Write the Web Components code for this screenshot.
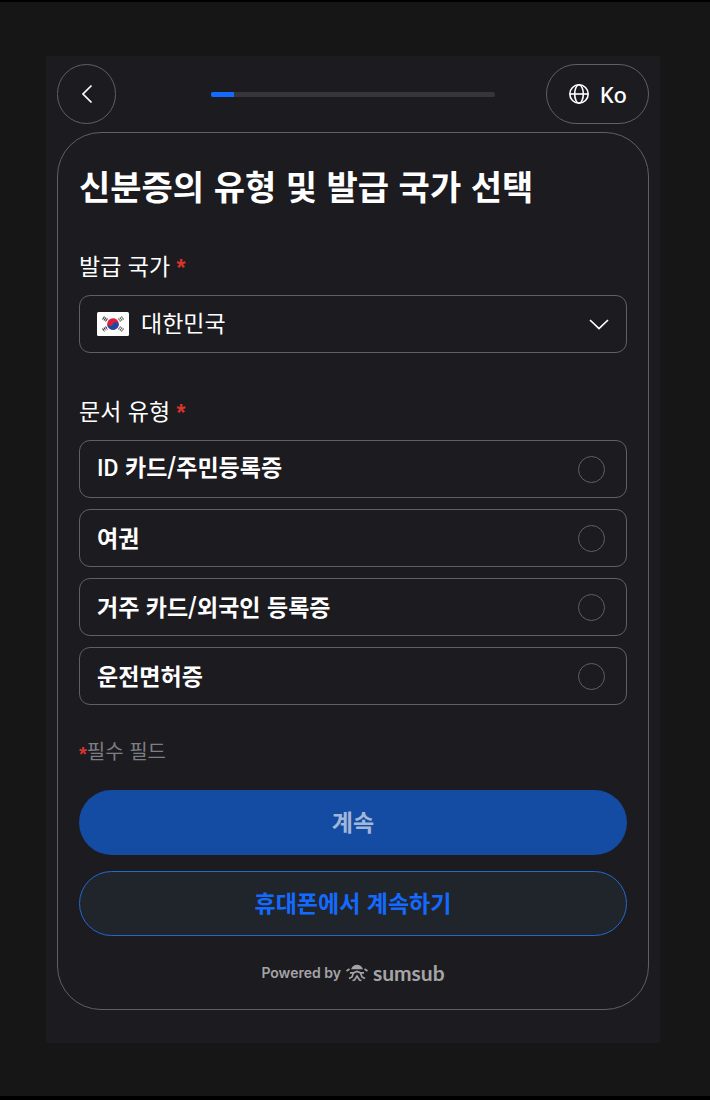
<!DOCTYPE html>
<html lang="ko">
<head>
<meta charset="utf-8">
<meta name="viewport" content="width=device-width, initial-scale=1">
<title>신분증의 유형 및 발급 국가 선택</title>
<style>
    :root {
        --color-page: #161616;
        --color-panel: #1c1b20;
        --color-line: #5f5f64;
        --color-text: #ffffff;
        --color-muted: #7e7e82;
        --color-required: #d9332e;
        --color-accent: #146aff;
    }

    html {
        background: var(--color-page);
    }

    body {
        box-sizing: border-box;
        min-height: 100vh;
        margin: 0;
        padding: 54px 50px 53px 46px;
        border-top: 2px solid #000;
        border-bottom: 4px solid #000;
        color: var(--color-text);
        font-family: "Noto Sans CJK KR", sans-serif;
        font-size: 23px;
        line-height: 32px;
    }
</style>
</head>
<body>
<verify-panel>
    <verify-header slot="header" value="8" language="Ko"></verify-header>
    <h1 slot="title">신분증의 유형 및 발급 국가 선택</h1>
    <country-field label="발급 국가" country="대한민국"></country-field>
    <document-options label="문서 유형"></document-options>
    <required-note>필수 필드</required-note>
    <action-button variant="primary">계속</action-button>
    <action-button variant="outline">휴대폰에서 계속하기</action-button>
    <powered-by slot="footer"></powered-by>
</verify-panel>

<script>
/**
 * Verify Panel - dark sheet with a header row and a rounded card
 */
class VerifyPanel extends HTMLElement {
    constructor() {
        super();
        this.attachShadow({ mode: 'open' });
        this.shadowRoot.innerHTML = `
            <style>
                :host {
                    display: block;
                    padding: 8px 11px 33px;
                    background: var(--color-panel);
                }

                .card {
                    display: flex;
                    flex-direction: column;
                    margin-top: 8px;
                    padding: 33px 21px 21px;
                    border: 1px solid var(--color-line);
                    border-radius: 44px;
                }

                ::slotted(h1) {
                    margin: 0 0 43px;
                    font-size: 34px;
                    font-weight: 700;
                    line-height: 40px;
                }
            </style>
            <slot name="header"></slot>
            <main class="card">
                <slot name="title"></slot>
                <slot></slot>
                <slot name="footer"></slot>
            </main>
        `;
    }
}

/**
 * Verify Header - back button, progress and language button
 */
class VerifyHeader extends HTMLElement {
    constructor() {
        super();
        this.attachShadow({ mode: 'open' });
    }

    connectedCallback() {
        const value = this.getAttribute('value') || '0';
        const language = this.getAttribute('language') || '';

        this.shadowRoot.innerHTML = `
            <style>
                :host {
                    display: grid;
                    grid-template-columns: 1fr 48% 1fr;
                    align-items: center;
                }

                button {
                    display: flex;
                    align-items: center;
                    justify-content: center;
                    height: 60px;
                    padding: 0;
                    border: 1px solid var(--color-line);
                    border-radius: 30px;
                    background: none;
                    color: inherit;
                    font: inherit;
                    cursor: pointer;
                }

                .back {
                    width: 59px;
                }

                .language {
                    justify-self: end;
                    gap: 10px;
                    padding: 0 21px;
                    font-family: "Noto Sans", sans-serif;
                    font-size: 22px;
                    font-weight: 500;
                }

                .track {
                    height: 5px;
                    border-radius: 2px;
                    background: #36363a;
                    overflow: hidden;
                }

                .bar {
                    width: ${value}%;
                    height: 100%;
                    background: var(--color-accent);
                }
            </style>
            <button class="back" type="button" aria-label="뒤로">
                <svg width="24" height="24" viewBox="0 0 24 24" fill="none" stroke="currentColor" stroke-width="1.7">
                    <path d="M16.5 3.5L8 12l8.5 8.5"/>
                </svg>
            </button>
            <div class="track" role="progressbar" aria-label="진행률" aria-valuemin="0" aria-valuemax="100" aria-valuenow="${value}">
                <div class="bar"></div>
            </div>
            <button class="language" type="button">
                <svg width="22" height="22" viewBox="0 0 22 22" fill="none" stroke="currentColor" stroke-width="1.6">
                    <circle cx="11" cy="11" r="9.2"/>
                    <ellipse cx="11" cy="11" rx="4.3" ry="9.2"/>
                    <path d="M2 11h18"/>
                </svg>
                <span>${language}</span>
            </button>
        `;
    }
}

/**
 * Required Star - red mark beside labels
 */
class RequiredStar extends HTMLElement {
    constructor() {
        super();
        this.attachShadow({ mode: 'open' });
        this.shadowRoot.innerHTML = `
            <style>
                :host {
                    display: inline-block;
                    vertical-align: middle;
                    color: var(--color-required);
                    font-family: "Liberation Sans", sans-serif;
                    font-weight: 700;
                    line-height: 1;
                }
            </style>
            <span>*</span>
        `;
    }
}

/**
 * Country Field - labelled drop-down with the flag of the chosen country
 */
class CountryField extends HTMLElement {
    constructor() {
        super();
        this.attachShadow({ mode: 'open' });
    }

    connectedCallback() {
        this.shadowRoot.innerHTML = `
            <style>
                :host {
                    display: block;
                    margin-bottom: 41px;
                }

                label {
                    display: block;
                    height: 32px;
                    margin-bottom: 14px;
                }

                .control {
                    display: flex;
                    align-items: center;
                    gap: 12px;
                    box-sizing: border-box;
                    height: 58px;
                    padding: 0 17px;
                    border: 1px solid var(--color-line);
                    border-radius: 11px;
                }

                select {
                    flex: 1;
                    min-width: 0;
                    padding: 0 0 4px;
                    border: 0;
                    background: none;
                    color: inherit;
                    font: inherit;
                    appearance: none;
                }
            </style>
            <label for="country">${this.getAttribute('label')} <required-star></required-star></label>
            <div class="control">
                <svg width="32" height="24" viewBox="0 0 32 24" aria-hidden="true">
                    <rect width="32" height="24" rx="1.5" fill="#fff"/>
                    <g transform="rotate(20 16 12)">
                        <circle cx="16" cy="12" r="5.8" fill="#dd1f3c"/>
                        <path d="M10.2 12a2.9 2.9 0 0 0 5.8 0 2.9 2.9 0 0 1 5.8 0 5.8 5.8 0 0 1-11.6 0z" fill="#1c49a5"/>
                    </g>
                    <g stroke="#333" stroke-width="1.1">
                        <path d="M5.5 7.5l2-3M7 8.5l2-3M8.5 9.5l2-3"/>
                        <path d="M26.5 7.5l-2-3M25 8.5l-2-3M23.5 9.5l-2-3" stroke-dasharray="1.5 .6"/>
                        <path d="M5.5 16.5l2 3M7 15.5l2 3M8.5 14.5l2 3" stroke-dasharray="2.5 .6"/>
                        <path d="M26.5 16.5l-2 3M25 15.5l-2 3M23.5 14.5l-2 3" stroke-dasharray="1.5 .6"/>
                    </g>
                </svg>
                <select id="country" required>
                    <option>${this.getAttribute('country')}</option>
                </select>
                <svg width="22" height="22" viewBox="0 0 22 22" fill="none" stroke="currentColor" stroke-width="1.7" aria-hidden="true">
                    <path d="M3 7l9 8.5L21 7"/>
                </svg>
            </div>
        `;
    }
}

/**
 * Document Options - one radio row per kind of document
 */
class DocumentOptions extends HTMLElement {
    constructor() {
        super();
        this.attachShadow({ mode: 'open' });
        this._items = [
            { value: 'id-card', title: '<span class="latin">ID</span> 카드/주민등록증' },
            { value: 'passport', title: '여권' },
            { value: 'residence', title: '거주 카드/외국인 등록증' },
            { value: 'driver', title: '운전면허증' },
        ];
    }

    connectedCallback() {
        this.shadowRoot.innerHTML = `
            <style>
                :host {
                    display: block;
                    margin-bottom: 30px;
                }

                fieldset {
                    min-width: 0;
                    margin: 0;
                    padding: 0;
                    border: 0;
                }

                legend {
                    height: 32px;
                    margin-bottom: 14px;
                    padding: 0;
                }

                .list {
                    display: grid;
                    gap: 11px;
                }

                label {
                    display: flex;
                    align-items: center;
                    justify-content: space-between;
                    box-sizing: border-box;
                    height: 58px;
                    padding: 0 21px 0 17px;
                    border: 1px solid var(--color-line);
                    border-radius: 11px;
                    font-weight: 700;
                    cursor: pointer;
                }

                .text {
                    padding-bottom: 3px;
                }

                .latin {
                    font-family: Roboto, sans-serif;
                    font-weight: 500;
                }

                input {
                    box-sizing: border-box;
                    width: 27px;
                    height: 27px;
                    margin: 0;
                    border: 1px solid var(--color-line);
                    border-radius: 50%;
                    appearance: none;
                }

                input:checked {
                    border: 8px solid var(--color-accent);
                }
            </style>
            <fieldset>
                <legend>${this.getAttribute('label')} <required-star></required-star></legend>
                <div class="list">
                    ${this._items.map(item => `
                        <label>
                            <span class="text">${item.title}</span>
                            <input type="radio" name="document" value="${item.value}">
                        </label>
                    `).join('')}
                </div>
            </fieldset>
        `;
    }
}

/**
 * Required Note - explains the star
 */
class RequiredNote extends HTMLElement {
    constructor() {
        super();
        this.attachShadow({ mode: 'open' });
        this.shadowRoot.innerHTML = `
            <style>
                :host {
                    display: block;
                    height: 32px;
                    margin-bottom: 23px;
                    color: var(--color-muted);
                    font-size: 20px;
                }
            </style>
            <required-star></required-star><slot></slot>
        `;
    }
}

/**
 * Action Button - full width pill, variant "primary" or "outline"
 */
class ActionButton extends HTMLElement {
    constructor() {
        super();
        this.attachShadow({ mode: 'open' });
        this.shadowRoot.innerHTML = `
            <style>
                :host {
                    display: block;
                    margin-bottom: 16px;
                }

                button {
                    display: block;
                    width: 100%;
                    height: 65px;
                    padding: 0 0 4px;
                    border: 0;
                    border-radius: 33px;
                    background: #144ba3;
                    color: #a1b7da;
                    font: inherit;
                    font-weight: 700;
                    cursor: pointer;
                }

                :host([variant="outline"]) button {
                    border: 1px solid #2468cf;
                    background: #20252c;
                    color: var(--color-accent);
                }
            </style>
            <button type="button"><slot></slot></button>
        `;
    }
}

/**
 * Powered By - vendor line under the buttons
 */
class PoweredBy extends HTMLElement {
    constructor() {
        super();
        this.attachShadow({ mode: 'open' });
        this.shadowRoot.innerHTML = `
            <style>
                :host {
                    display: flex;
                    align-items: center;
                    justify-content: center;
                    gap: 5px;
                    margin-top: 6px;
                    color: #a4a4a6;
                    font-family: Inter, sans-serif;
                    font-size: 14px;
                    font-weight: 600;
                    line-height: 30px;
                }

                .brand {
                    font-family: Lato, sans-serif;
                    font-size: 21px;
                    font-weight: 700;
                }
            </style>
            <span>Powered by</span>
            <svg width="22" height="18" viewBox="0 0 22 18" fill="none" stroke="currentColor" stroke-width="1.7" aria-hidden="true">
                <path d="M5 5.2C6.5 2 8.5.8 11 .8s4.500 1.200 6 4.400z" fill="currentColor" stroke="none"/>
                <path d="M.5 7L3.5 5M18.5 5l3 2M4 8.800h3.500L11 7.500l3.500 1.300H18M7.500 9l-1.500 4-3 1.500M14.500 9l1.500 4 3 1.500M6.500 16.500l2-.5 2.500-4 2.500 4 2 .5"/>
            </svg>
            <span class="brand">sumsub</span>
        `;
    }
}

customElements.define('verify-panel', VerifyPanel);
customElements.define('verify-header', VerifyHeader);
customElements.define('required-star', RequiredStar);
customElements.define('country-field', CountryField);
customElements.define('document-options', DocumentOptions);
customElements.define('required-note', RequiredNote);
customElements.define('action-button', ActionButton);
customElements.define('powered-by', PoweredBy);
</script>
</body>
</html>
